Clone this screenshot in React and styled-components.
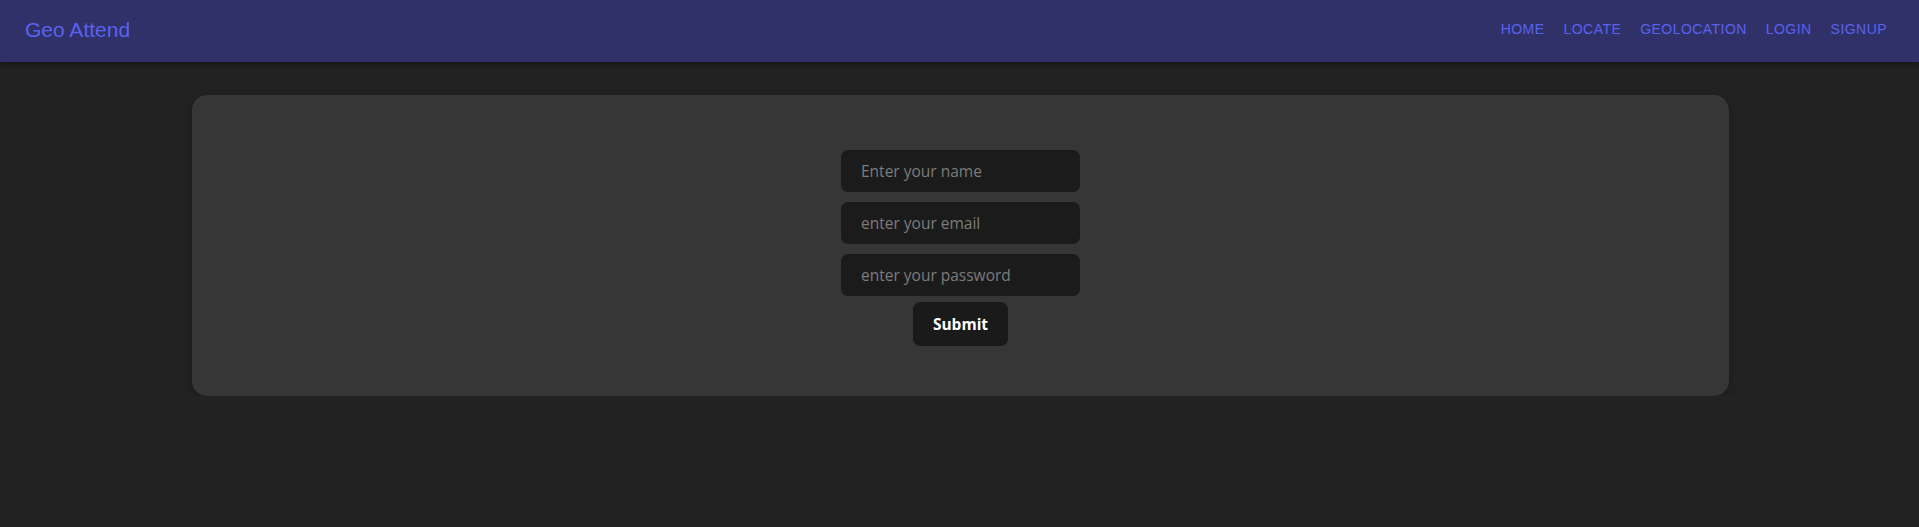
import React from "react"
import styled, { createGlobalStyle } from "styled-components"

const GlobalStyle = createGlobalStyle`
  html, body {
    margin: 0;
    padding: 0;
    background: #222222;
    font-family: "Liberation Sans", Arial, sans-serif;
  }
`

const Nav = styled.nav`
  height: 62px;
  background: #303169;
  display: flex;
  align-items: center;
  justify-content: space-between;
  padding: 0 32px 0 25px;
  box-shadow: 0 2px 6px rgba(0, 0, 0, 0.45);
  box-sizing: border-box;
`

const Brand = styled.a`
  color: #5b61ef;
  font-size: 21px;
  text-decoration: none;
  margin-top: -2px;
`

const Links = styled.ul`
  display: flex;
  gap: 19px;
  list-style: none;
  margin: 0;
  padding: 0;
  margin-top: -4px;
`

const NavLink = styled.a`
  color: #5b61ef;
  font-size: 14px;
  letter-spacing: 0.45px;
  text-transform: uppercase;
  text-decoration: none;
`

const Main = styled.main`
  padding: 33px 190px 0 192px;
`

const Card = styled.section`
  background: #363636;
  border-radius: 15px;
  box-shadow: 0 2px 8px rgba(0, 0, 0, 0.25);
  padding: 55px 0 50px;
  display: flex;
  justify-content: center;
`

const Form = styled.form`
  display: flex;
  flex-direction: column;
  align-items: center;
  gap: 10px;
`

const Input = styled.input`
  width: 239px;
  height: 42px;
  box-sizing: border-box;
  background: #1b1b1b;
  border: none;
  border-radius: 7px;
  padding: 0 20px;
  color: #ddd;
  font-family: "Open Sans", "Noto Sans", sans-serif;
  font-size: 15.5px;
  outline: none;

  &::placeholder {
    color: #7c7c7c;
  }
`

const Button = styled.button`
  margin-top: -4px;
  width: 95px;
  height: 44px;
  background: #1a1a1a;
  color: #fff;
  border: none;
  border-radius: 7px;
  font-family: "Open Sans", "Noto Sans", sans-serif;
  font-weight: 700;
  font-size: 15.5px;
  cursor: pointer;
`

const links = ["Home", "Locate", "Geolocation", "Login", "Signup"]

export default function App() {
  return (
    <>
      <GlobalStyle />
      <Nav>
        <Brand href="#">Geo Attend</Brand>
        <Links>
          {links.map((l) => (
            <li key={l}>
              <NavLink href="#">{l}</NavLink>
            </li>
          ))}
        </Links>
      </Nav>
      <Main>
        <Card>
          <Form onSubmit={(e) => e.preventDefault()}>
            <Input type="text" placeholder="Enter your name" />
            <Input type="email" placeholder="enter your email" />
            <Input type="password" placeholder="enter your password" />
            <Button type="submit">Submit</Button>
          </Form>
        </Card>
      </Main>
    </>
  )
}
